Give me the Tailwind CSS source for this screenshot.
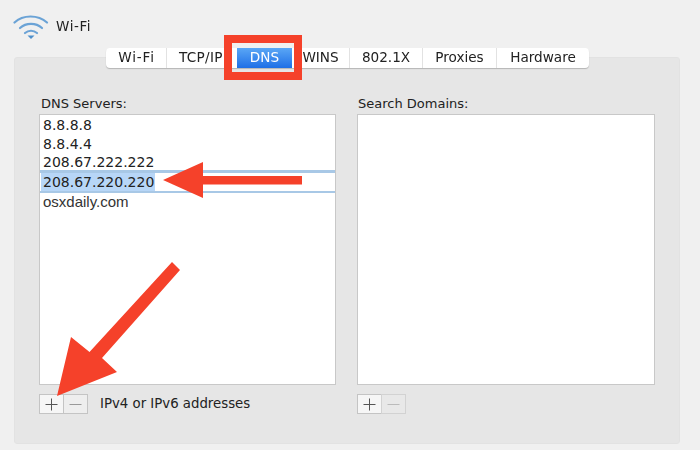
<!DOCTYPE html>
<html>
<head>
<meta charset="utf-8">
<script src="https://cdn.jsdelivr.net/npm/@tailwindcss/browser@4"></script>
</head>
<body class="m-0">
<div class="relative w-[700px] h-[450px] overflow-hidden bg-[#f0f0f0] font-['DejaVu_Sans',sans-serif] text-[#222] text-[13px]">
  <div class="blur-[0.35px]">
  <div class="flex items-center gap-[7px] pl-[13px] pt-[6px] h-[48px]">
    <svg width="36" height="26" viewBox="0 0 36 26" fill="none" stroke="#6ba3d6" stroke-width="2.2" stroke-linecap="round">
      <path d="M1.500 8.500C10 0.500 25 0.500 34 8.500"/>
      <path d="M7 14C13 8.500 23 8.500 29 14"/>
      <path d="M12 19C15.500 16 20.500 16 24 19"/>
      <path d="M14.500 21.500L21.500 21.500L18 25Z" fill="#4f8fca" stroke="none"/>
    </svg>
    <span class="text-[13.500px] tracking-[0.6px] leading-none">Wi-Fi</span>
  </div>

  <div class="relative mx-[14px] mt-[9px] w-[666px] h-[387px] bg-[#e6e6e6] rounded-[3px] border border-[#e2e2e2] px-[24px]">
    <div class="absolute left-[91px] -top-[10px] w-[483px] h-[20px] flex bg-white rounded-[4px] shadow-[0_1px_1px_#b5b5b5] text-[13.600px] leading-[19px] text-center">
      <div class="w-[61px] pl-[1px] border-r border-[#e2e2e2] tracking-[0.8px]">Wi-Fi</div>
      <div class="w-[65px] text-left pl-[12px] whitespace-nowrap overflow-hidden tracking-[0.3px]">TCP/IP</div>
      <div class="w-[55px] ml-[5px] bg-gradient-to-b from-[#5aa6f5] to-[#1e6fe6] text-white">DNS</div>
      <div class="w-[58px] border-r border-[#e2e2e2]">WINS</div>
      <div class="w-[73px] border-r border-[#e2e2e2]">802.1X</div>
      <div class="w-[74px] border-r border-[#e2e2e2]">Proxies</div>
      <div class="flex-1">Hardware</div>
    </div>

    <div class="flex gap-[21px] pt-[36px]">
      <div class="w-[297px] shrink-0">
        <div class="h-[20px] pl-[2px] leading-[20px]">DNS Servers:</div>
        <div class="h-[271px] bg-white border border-[#c8c8c8] pt-[1px] text-[14px] leading-[18.500px]">
          <div class="pl-[3px] h-[18.500px]">8.8.8.8</div>
          <div class="pl-[3px] h-[18.500px]">8.8.4.4</div>
          <div class="pl-[3px] h-[18.500px]">208.67.222.222</div>
          <div class="h-[23px] -mt-[2px] border-t-[3px] border-b-[2px] border-[#a8c8e6] pl-[1px] leading-[18px]"><span class="inline-block bg-[#b7d6f7] pl-[2px] pr-[1px] h-[18px]">208.67.220.220</span></div>
          <div class="pl-[3px] h-[18.500px] text-[#333] font-['Liberation_Sans',sans-serif] text-[15px]">osxdaily.com</div>
        </div>
        <div class="flex items-center mt-[9px]">
          <div class="w-[25px] h-[20px] bg-[#f6f6f6] border border-[#c4c4c4] flex items-center justify-center">
            <svg width="13" height="13" viewBox="0 0 13 13" stroke="#555" stroke-width="1"><path d="M6.500 0.500V12.500M0.500 6.500H12.500"/></svg>
          </div>
          <div class="w-[25px] h-[20px] -ml-[1px] bg-[#eeeeee] border border-[#c4c4c4] flex items-center justify-center">
            <svg width="13" height="13" viewBox="0 0 13 13" stroke="#999" stroke-width="1"><path d="M0.500 6.500H12.500"/></svg>
          </div>
          <span class="ml-[12px] text-[13.300px]">IPv4 or IPv6 addresses</span>
        </div>
      </div>
      <div class="w-[298px] shrink-0">
        <div class="h-[20px] pl-[1px] leading-[20px]">Search Domains:</div>
        <div class="h-[271px] bg-white border border-[#c8c8c8]"></div>
        <div class="flex items-center mt-[9px]">
          <div class="w-[25px] h-[20px] bg-[#f6f6f6] border border-[#c4c4c4] flex items-center justify-center">
            <svg width="13" height="13" viewBox="0 0 13 13" stroke="#555" stroke-width="1"><path d="M6.500 0.500V12.500M0.500 6.500H12.500"/></svg>
          </div>
          <div class="w-[25px] h-[20px] -ml-[1px] bg-[#e8e8e8] border border-[#d2d2d2] flex items-center justify-center">
            <svg width="13" height="13" viewBox="0 0 13 13" stroke="#bbb" stroke-width="1"><path d="M0.500 6.500H12.500"/></svg>
          </div>
        </div>
      </div>
    </div>
  </div>

  <div class="absolute left-[224px] top-[35px] w-[78px] h-[45px] border-[8px] border-[#f5412a]"></div>
  <svg class="absolute inset-0 pointer-events-none" width="700" height="450" viewBox="0 0 700 450">
    <path d="M163 180L203 162L203 176L302 176L302 184.500L203 184.500L203 198Z" fill="#f5412a"/>
    <path d="M57 396L71 337L89.500 352L172 262L180 270L102 358L117 372Z" fill="#f5412a"/>
  </svg>
  </div>
</div>
</body>
</html>
